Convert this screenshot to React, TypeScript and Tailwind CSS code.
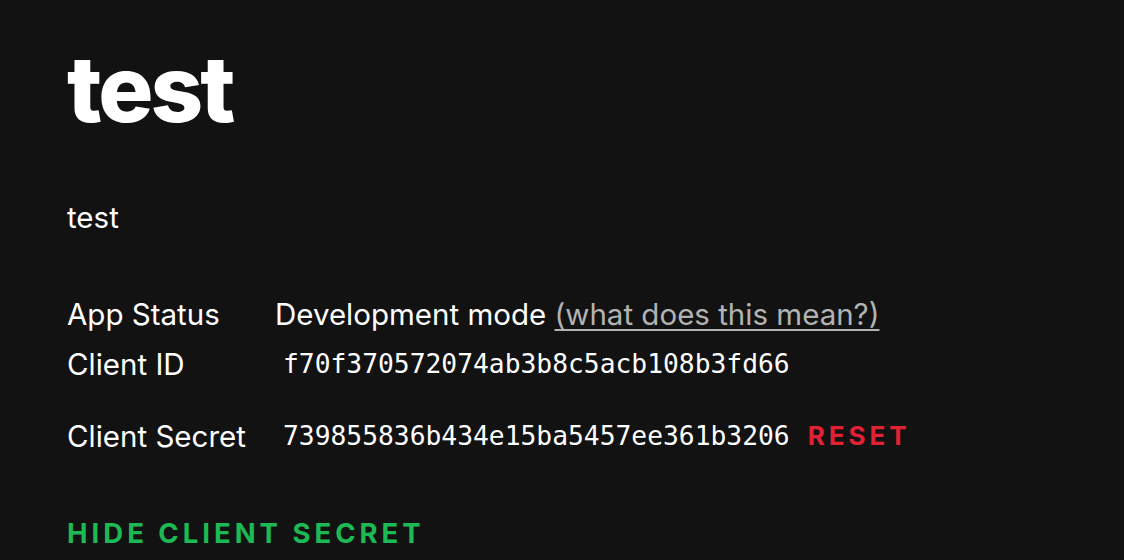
import React from "react";

export default function App() {
  return (
    <div className="w-[1124px] h-[560px] overflow-hidden bg-[#121212] text-white font-['Inter','Lato',sans-serif]">
      <div className="pl-[67px] pt-[39px]">
        <h1 className="text-[92px] leading-[100px] font-extrabold tracking-[-3px]">test</h1>
        <p className="mt-[58px] text-[29.5px] leading-[40px]">test</p>
        <div className="mt-[52px] grid grid-cols-[208px_1fr] text-[29.5px]">
          <div className="leading-[50px]">App Status</div>
          <div className="leading-[50px]">
            Development mode{" "}
            <a className="text-[#b3b3b3] underline underline-offset-4">(what does this mean?)</a>
          </div>
          <div className="leading-[50px]">Client ID</div>
          <div className="leading-[50px] pl-[8px] font-['DejaVu_Sans_Mono',monospace] text-[26.3px]">f70f370572074ab3b8c5acb108b3fd66</div>
          <div className="mt-[22px] leading-[50px]">Client Secret</div>
          <div className="mt-[22px] leading-[50px] pl-[8px] flex items-center gap-[18px]">
            <span className="font-['DejaVu_Sans_Mono',monospace] text-[26.3px]">739855836b434e15ba5457ee361b3206</span>
            <span className="text-[#e22134] font-bold text-[26px] tracking-[4px]">RESET</span>
          </div>
        </div>
        <div className="mt-[52px] text-[#1db954] font-bold text-[27.5px] tracking-[4px] leading-[40px]">HIDE CLIENT SECRET</div>
      </div>
    </div>
  );
}
